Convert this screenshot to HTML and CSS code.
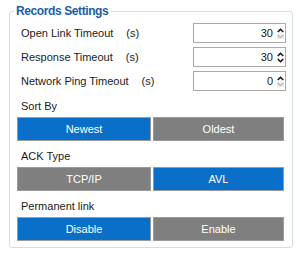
FILE: index.html
```html
<!DOCTYPE html>
<html lang="en">
<head>
    <meta charset="UTF-8">
    <title>Records Settings</title>
    <link rel="stylesheet" href="styles.css">
</head>
<body>
    <fieldset class="group">
        <legend>Records Settings</legend>

        <div class="field">
            <span class="label">Open Link Timeout</span>
            <span class="unit">(s)</span>
            <div class="spin">
                <span class="value">30</span>
                <div class="arrows">
                    <svg class="arrow" width="7" height="5" viewBox="0 0 7 5"><polyline points="0.8,4 3.5,1.3 6.2,4"/></svg>
                    <svg class="arrow off" width="7" height="5" viewBox="0 0 7 5"><polyline points="0.8,1 3.5,3.7 6.2,1"/></svg>
                </div>
            </div>
        </div>

        <div class="field">
            <span class="label">Response Timeout</span>
            <span class="unit">(s)</span>
            <div class="spin">
                <span class="value">30</span>
                <div class="arrows">
                    <svg class="arrow" width="7" height="5" viewBox="0 0 7 5"><polyline points="0.8,4 3.5,1.3 6.2,4"/></svg>
                    <svg class="arrow" width="7" height="5" viewBox="0 0 7 5"><polyline points="0.8,1 3.5,3.7 6.2,1"/></svg>
                </div>
            </div>
        </div>

        <div class="field">
            <span class="label">Network Ping Timeout</span>
            <span class="unit">(s)</span>
            <div class="spin">
                <span class="value">0</span>
                <div class="arrows">
                    <svg class="arrow" width="7" height="5" viewBox="0 0 7 5"><polyline points="0.8,4 3.5,1.3 6.2,4"/></svg>
                    <svg class="arrow off" width="7" height="5" viewBox="0 0 7 5"><polyline points="0.8,1 3.5,3.7 6.2,1"/></svg>
                </div>
            </div>
        </div>

        <div class="caption">Sort By</div>
        <div class="toggle">
            <button class="active">Newest</button>
            <button>Oldest</button>
        </div>

        <div class="caption">ACK Type</div>
        <div class="toggle">
            <button>TCP/IP</button>
            <button class="active">AVL</button>
        </div>

        <div class="caption">Permanent link</div>
        <div class="toggle">
            <button class="active">Disable</button>
            <button>Enable</button>
        </div>
    </fieldset>
</body>
</html>
```

FILE: styles.css
```css
* {
    box-sizing: border-box;
}

body {
    margin: 0;
    width: 300px;
    height: 258px;
    background-color: white;
    color: #1b1b1b;
    font-family: "Liberation Sans", Arial, sans-serif;
    font-size: 11px;
}

.group {
    margin: 4px 7px 0 9px;
    padding: 4px 6px 6px 7px;
    border: 1px solid #d3dde4;
    border-radius: 3px;
    min-width: 0;
}

.group legend {
    margin-left: -3px;
    padding: 0 3px 0 2px;
    line-height: 15px;
    font-size: 12px;
    font-weight: bold;
    letter-spacing: -0.4px;
    color: #1a5ea6;
}

.field {
    display: flex;
    align-items: center;
    height: 20px;
    margin-bottom: 4px;
    padding-left: 4px;
}

.unit {
    margin-left: 13px;
}

.spin {
    margin-left: auto;
    width: 93px;
    height: 20px;
    border: 1px solid #a9a9a9;
    display: flex;
    align-items: center;
    justify-content: flex-end;
    padding-right: 1px;
}

.value {
    margin-right: 3px;
}

.arrows {
    display: flex;
    flex-direction: column;
    gap: 1px;
    width: 8px;
    align-items: center;
}

.arrow {
    display: block;
}

.arrow polyline {
    fill: none;
    stroke: #111;
    stroke-width: 1.6;
}

.arrow.off {
    background-color: #ececec;
}

.arrow.off polyline {
    stroke: #b5b5b5;
    stroke-width: 1.2;
}

.caption {
    height: 22px;
    line-height: 22px;
    padding-left: 4px;
}

.toggle {
    display: grid;
    grid-template-columns: 134px 1fr;
    gap: 2px;
    margin-right: 2px;
    margin-bottom: 4px;
}

.toggle:last-child {
    margin-bottom: 0;
}

button {
    height: 24px;
    border: 1px solid #9a9a9a;
    background-color: #7f7f7f;
    color: white;
    font-family: "Liberation Sans", Arial, sans-serif;
    font-size: 11px;
    padding: 0;
}

button.active {
    background-color: #0a6fc8;
}
```
